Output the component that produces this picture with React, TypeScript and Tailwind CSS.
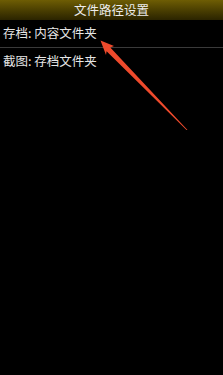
import React from 'react';

const font = { fontFamily: '"Noto Sans CJK SC", "Liberation Sans", sans-serif' };

const App: React.FC = () => {
  return (
    <div className="relative w-[223px] h-[375px] bg-black overflow-hidden" style={font}>
      {/* Title bar */}
      <div className="h-[20px] flex items-center justify-center bg-gradient-to-b from-[#6e5d04] to-[#2b2400] text-[12.5px] text-[#ececec] leading-none">
        文件路径设置
      </div>

      {/* Rows */}
      <div className="h-[27px] flex items-center px-[3px] text-[12.5px] text-[#e6e6e6] leading-none">
        存档: 内容文件夹
      </div>
      <div className="h-px bg-[#3a3a3a]" />
      <div className="h-[27px] flex items-center px-[3px] text-[12.5px] text-[#e6e6e6] leading-none">
        截图: 存档文件夹
      </div>

      {/* Annotation arrow */}
      <svg className="absolute left-0 top-0" width="223" height="375" viewBox="0 0 223 375">
        <polygon points="100.5,40.5 114,46 110.3,47.6 187.5,130 186.5,130 106.6,51.2 106,55" fill="#ee4a2c" />
      </svg>
    </div>
  );
};

export default App;
